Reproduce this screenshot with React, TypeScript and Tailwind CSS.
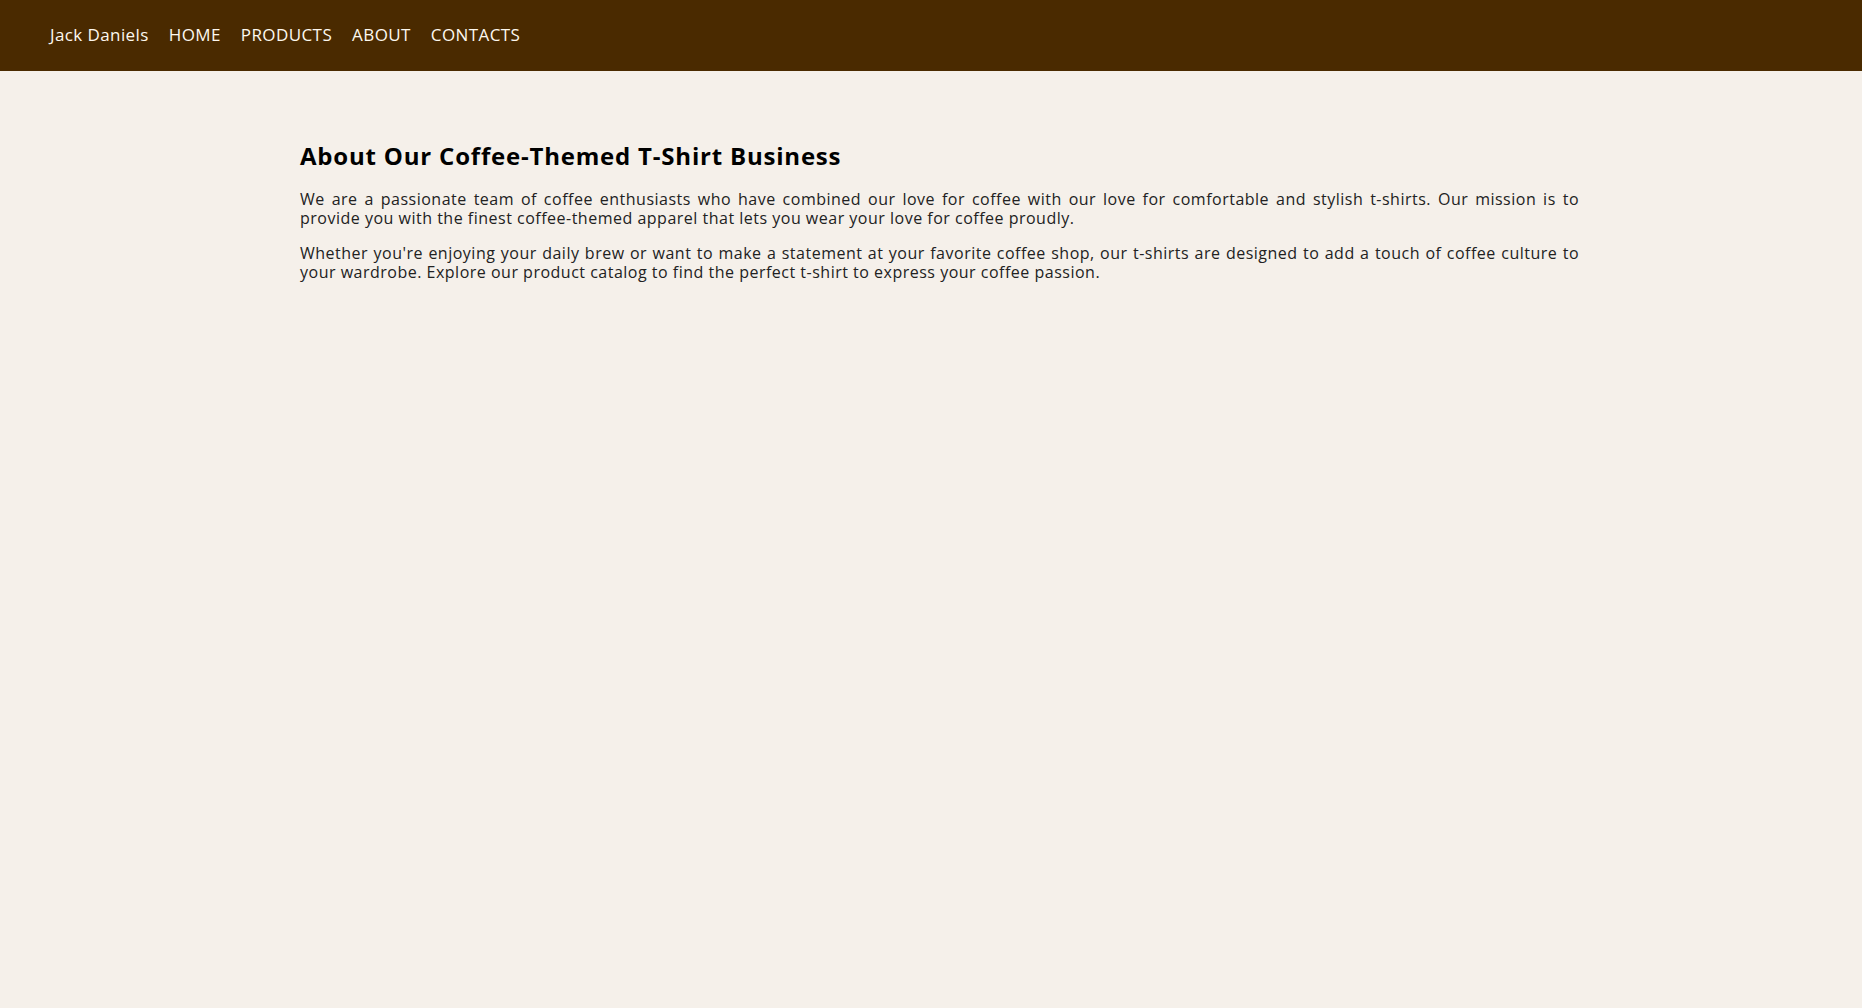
export default function App() {
  const navLinks = [
    { href: '#', label: 'HOME' },
    { href: '#', label: 'PRODUCTS' },
    { href: '#', label: 'ABOUT' },
    { href: '#', label: 'CONTACTS' },
  ]

  return (
    <div className="min-h-screen bg-[#f5f0ea] font-['Open_Sans',sans-serif]">
      {/* Header */}
      <header className="h-[71px] bg-[#4a2a00] flex items-center pl-[50px] pb-[2px]">
        <nav className="flex items-center gap-[20px] text-[17px] tracking-[0.4px] text-[#fdf8ef]">
          <a href="#">Jack Daniels</a>
          {navLinks.map((link) => (
            <a key={link.label} href={link.href}>
              {link.label}
            </a>
          ))}
        </nav>
      </header>

      {/* About */}
      <main className="ml-[300px] w-[1279px] pt-[70px]">
        <h1 className="text-[24px] font-bold tracking-[0.8px] text-black leading-[29px] mb-[20px]">
          About Our Coffee-Themed T-Shirt Business
        </h1>
        <p className="text-[16px] leading-[19px] tracking-[0.5px] text-[#222] text-justify mb-[16px]">
          We are a passionate team of coffee enthusiasts who have combined our love for coffee with our love for
          comfortable and stylish t-shirts. Our mission is to provide you with the finest coffee-themed apparel that
          lets you wear your love for coffee proudly.
        </p>
        <p className="text-[16px] leading-[19px] tracking-[0.5px] text-[#222] text-justify">
          Whether you're enjoying your daily brew or want to make a statement at your favorite coffee shop, our
          t-shirts are designed to add a touch of coffee culture to your wardrobe. Explore our product catalog to find
          the perfect t-shirt to express your coffee passion.
        </p>
      </main>
    </div>
  )
}
